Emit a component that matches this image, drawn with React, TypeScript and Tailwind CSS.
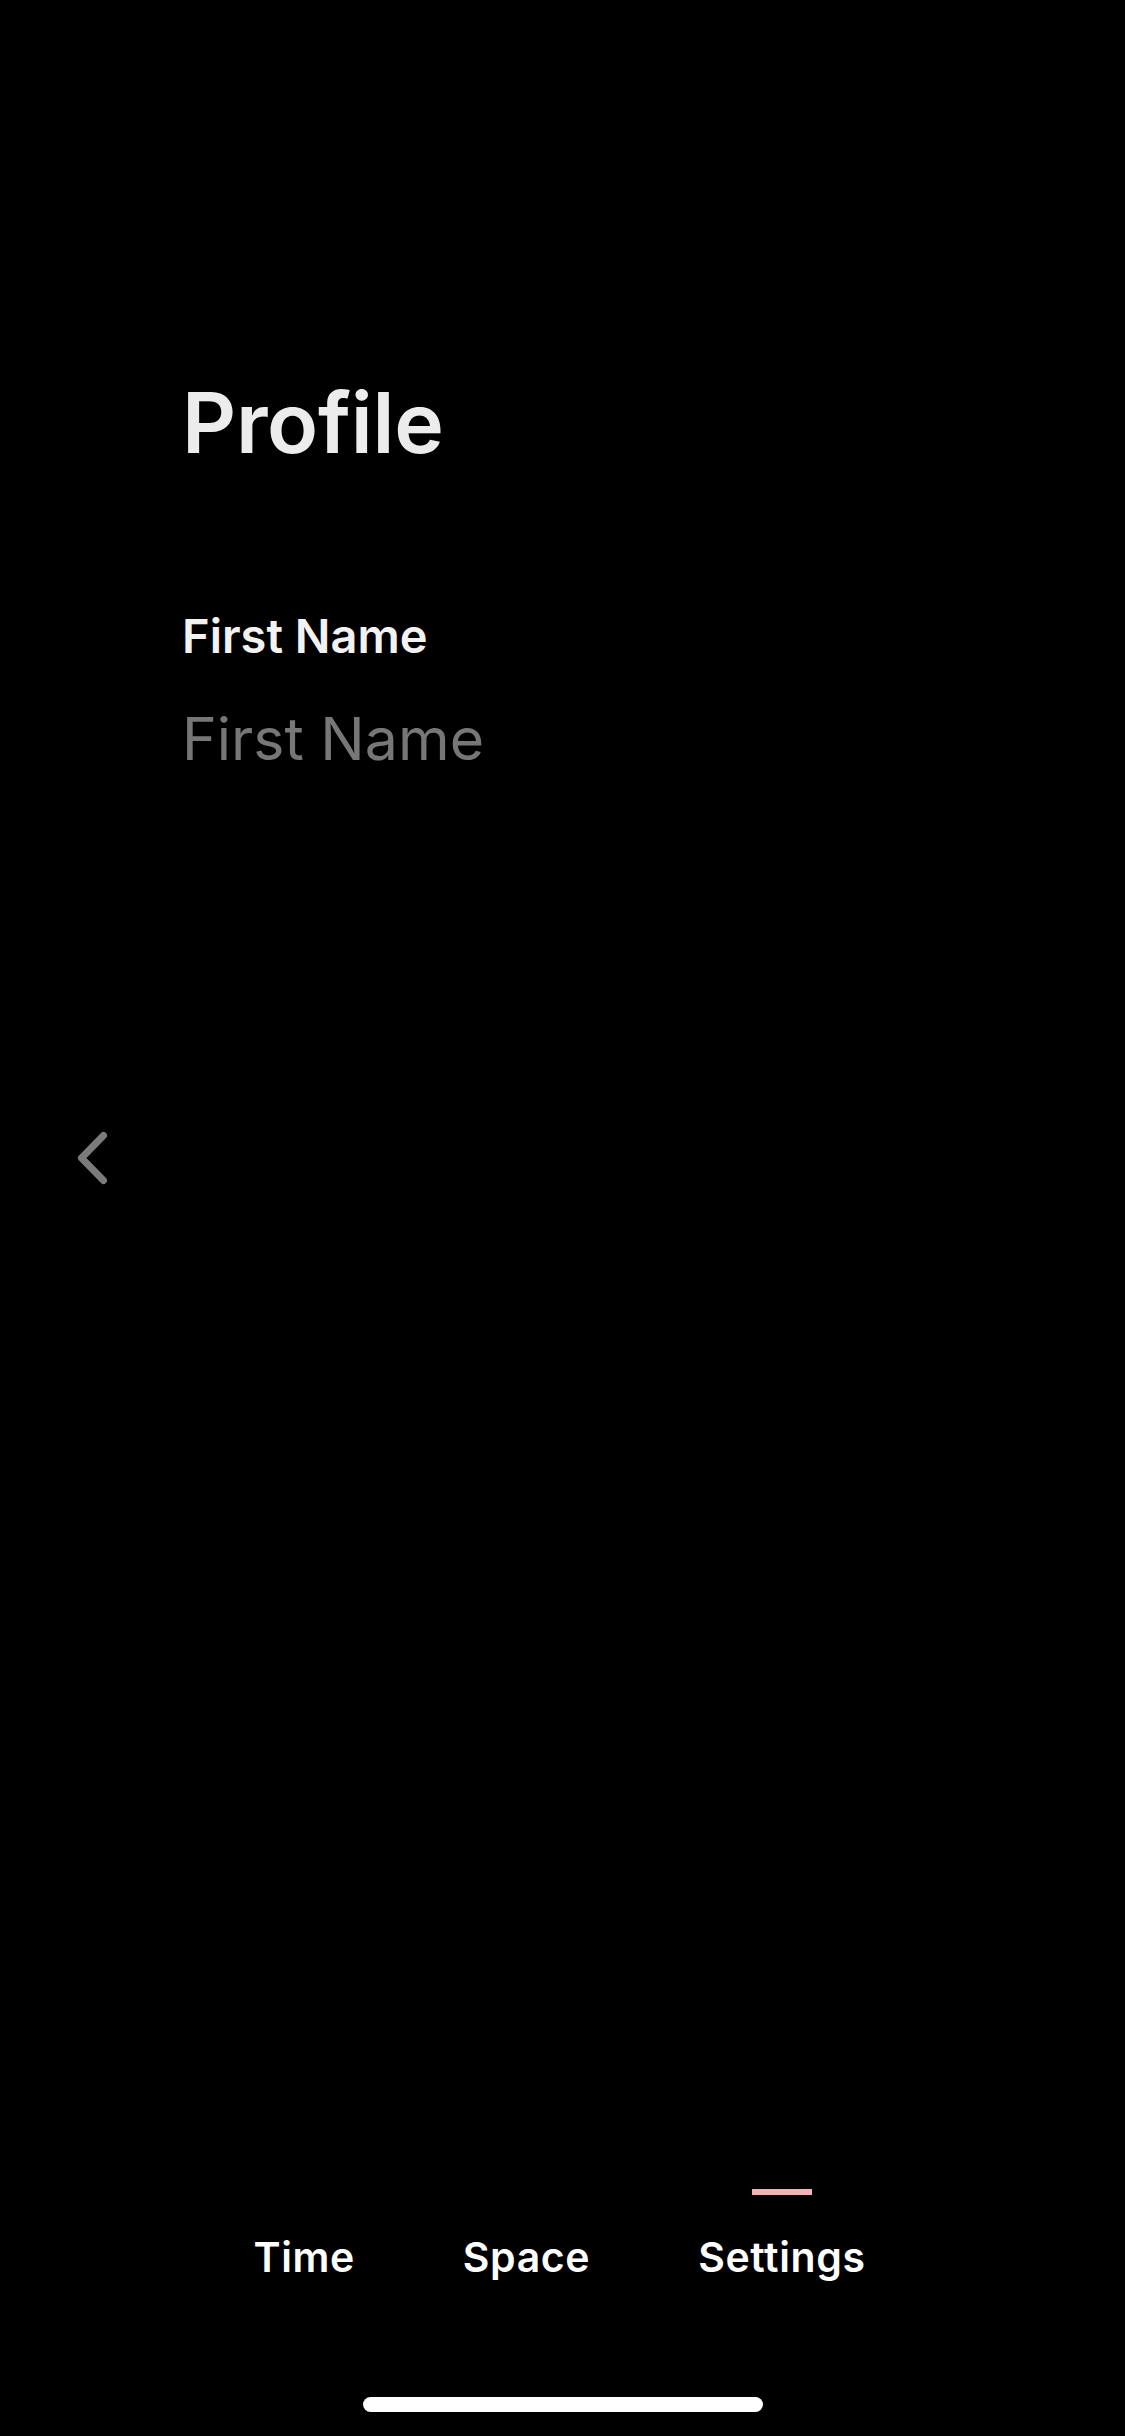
const tabs = [
  { label: "Time", active: false },
  { label: "Space", active: false },
  { label: "Settings", active: true },
];

function BackChevron() {
  return (
    <button className="absolute left-[70px] top-[1120px] w-[40px] h-[80px]">
      <svg width="40" height="80" viewBox="0 0 40 80" fill="none">
        <polyline
          points="33.5,15.5 11.5,38 33.5,60.5"
          stroke="#7b7b7b"
          strokeWidth="7"
          strokeLinecap="round"
          strokeLinejoin="round"
        />
      </svg>
    </button>
  );
}

export default function App() {
  return (
    <div
      className="relative w-[1125px] h-[2436px] bg-black flex flex-col overflow-hidden"
      style={{ fontFamily: "Inter, 'Noto Sans', sans-serif" }}
    >
      {/* Profile form */}
      <div className="flex flex-col pl-[182px] pt-[381px]">
        <h1 className="text-[84px] leading-none font-semibold text-[#ececec] tracking-[-0.3px]">
          Profile
        </h1>
        <label className="mt-[147px] text-[47px] leading-none font-semibold text-[#f2f2f2]">
          First Name
        </label>
        <input
          className="mt-[44px] w-[800px] bg-transparent outline-none text-[59px] leading-none text-[#f2f2f2] placeholder:text-[#777777]"
          placeholder="First Name"
        />
      </div>

      <BackChevron />

      <div className="flex-1" />

      {/* Tab bar */}
      <nav className="flex justify-center gap-[108px] pr-[6px]">
        {tabs.map((t) => (
          <div key={t.label} className="flex flex-col items-center">
            <div
              className={
                t.active
                  ? "w-[60px] h-[6px] bg-[#f0b3b8]"
                  : "w-[60px] h-[6px] bg-transparent"
              }
            />
            <span className="mt-[42px] text-[41px] leading-none font-semibold text-white tracking-[0.6px]">
              {t.label}
            </span>
          </div>
        ))}
      </nav>

      {/* Home indicator */}
      <div className="flex justify-center mt-[119px] mb-[24px]">
        <div className="w-[400px] h-[15px] rounded-full bg-white" />
      </div>
    </div>
  );
}
